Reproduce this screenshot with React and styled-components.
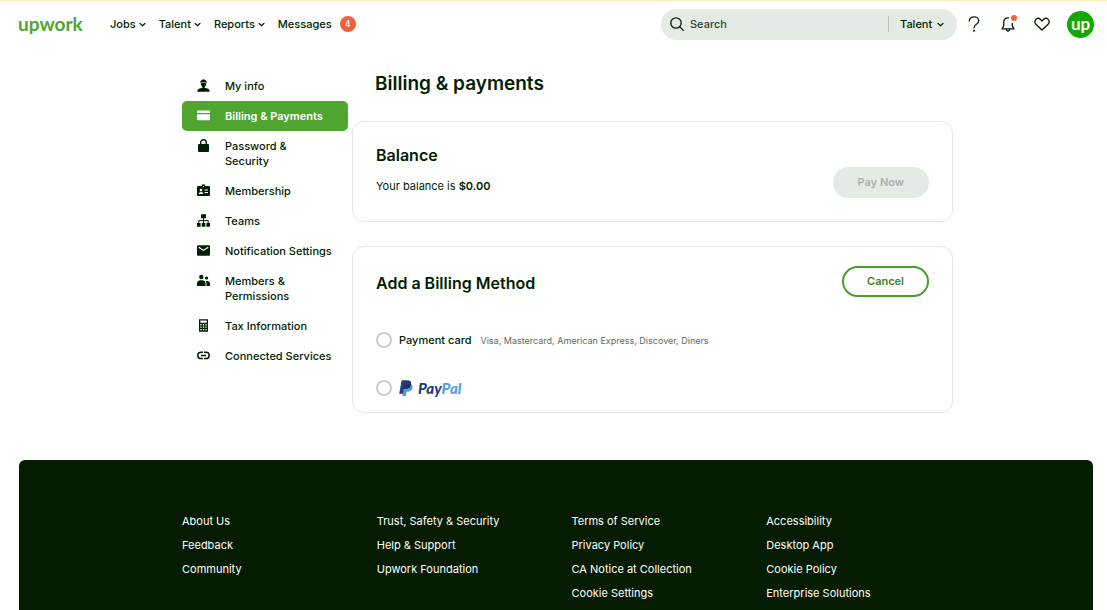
import { useState } from 'react';
import styled, { createGlobalStyle } from 'styled-components';

const GlobalStyle = createGlobalStyle`
  *, *::before, *::after {
    box-sizing: border-box;
  }
  body {
    margin: 0;
    background: #fff;
    color: #001e00;
    font-family: Inter, 'Helvetica Neue', Arial, sans-serif;
    font-size: 11px;
    line-height: 15px;
  }
  a {
    color: inherit;
    text-decoration: none;
  }
  button, input, select {
    font: inherit;
    color: inherit;
  }
`;

const SApp = styled.div`
  min-height: 100vh;
  display: flex;
  flex-direction: column;
  border-top: 1px solid #ffedc2;
`;

const SHeader = styled.header`
  display: flex;
  align-items: center;
  height: 46px;
  padding: 0 13px 0 18px;
`;

const SLogo = styled.a`
  width: 92px;
  color: #4fa52f;
  font-family: Lato, sans-serif;
  font-size: 19px;
  font-weight: 700;
  line-height: 24px;
`;

const SNav = styled.nav`
  display: flex;
  align-items: center;
  gap: 13px;
`;

const SNavButton = styled.button`
  display: flex;
  align-items: center;
  gap: 3px;
  padding: 0;
  border: 0;
  background: none;
  font-weight: 500;
`;

const SNavLink = styled.a`
  display: flex;
  align-items: center;
  gap: 8px;
  font-weight: 500;
`;

const SCount = styled.span`
  width: 16px;
  height: 16px;
  border-radius: 50%;
  background: #f0603c;
  color: #fff;
  font-size: 9px;
  line-height: 16px;
  text-align: center;
`;

const SSearch = styled.form`
  display: flex;
  align-items: center;
  width: 296px;
  height: 31px;
  margin-left: auto;
  padding: 0 13px 0 9px;
  border-radius: 16px;
  background: #e4ebe4;
`;

const SSearchInput = styled.input`
  flex: 1;
  min-width: 0;
  padding: 0 6px;
  border: 0;
  outline: 0;
  background: none;
  font-weight: 500;
  &::placeholder {
    color: #2f432f;
    opacity: 1;
  }
`;

const SSearchType = styled.div`
  display: flex;
  align-items: center;
  height: 16px;
  padding-left: 11px;
  border-left: 1px solid #b9c4b9;
  svg {
    margin-left: -7px;
    pointer-events: none;
  }
`;

const SSelect = styled.select`
  appearance: none;
  padding: 0 11px 0 0;
  border: 0;
  outline: 0;
  background: none;
  font-weight: 500;
`;

const SActions = styled.div`
  display: flex;
  align-items: center;
  gap: 16px;
  margin-left: 8px;
`;

const SIconButton = styled.button`
  position: relative;
  display: flex;
  padding: 0;
  border: 0;
  background: none;
`;

const SDot = styled.span`
  position: absolute;
  top: 0;
  right: 0;
  width: 6px;
  height: 6px;
  border-radius: 50%;
  background: #f0603c;
`;

const SAvatar = styled.button`
  width: 27px;
  height: 27px;
  padding: 0;
  border: 0;
  border-radius: 50%;
  background: #14a800;
  color: #fff;
  font-family: Lato, sans-serif;
  font-size: 17px;
  font-weight: 700;
  line-height: 22px;
`;

const SBody = styled.div`
  display: flex;
  align-items: flex-start;
  gap: 4px;
  padding: 24px 154px 47px 182px;
`;

const SSidebar = styled.nav`
  flex: 0 0 166px;
`;

const SSideLink = styled.a`
  display: flex;
  align-items: flex-start;
  gap: 15px;
  padding: 8px 15px 7px;
  border-radius: 5px;
  background: ${({ $active }) => ($active ? '#4fa52f' : 'transparent')};
  color: ${({ $active }) => ($active ? '#fff' : '#001e00')};
  font-weight: ${({ $active }) => ($active ? 600 : 500)};
  svg {
    flex: none;
  }
`;

const SMain = styled.main`
  flex: 1;
  min-width: 0;
  display: flex;
  flex-direction: column;
  gap: 24px;
`;

const STitle = styled.h1`
  margin: 0;
  padding-left: 23px;
  font-size: 19px;
  font-weight: 600;
  line-height: 26px;
`;

const SCard = styled.section`
  padding: 19px 23px 16px;
  border: 1px solid #e1e7e1;
  border-radius: 12px;
`;

const SCardTitle = styled.h2`
  margin: 0;
  font-size: 16px;
  font-weight: 600;
  line-height: 28px;
`;

const SCardHeader = styled.div`
  display: flex;
  align-items: flex-end;
  justify-content: space-between;
`;

const SBalanceRow = styled.div`
  display: flex;
  align-items: flex-start;
  justify-content: space-between;
  padding-bottom: 7px;
  p {
    margin: 10px 0 0;
  }
  strong {
    font-weight: 600;
  }
  button {
    margin-top: -2px;
  }
`;

const SButton = styled.button`
  height: 31px;
  padding: 0 23px;
  border: 2px solid ${({ disabled }) => (disabled ? '#e4ebe4' : '#4a9c2d')};
  border-radius: 16px;
  background: ${({ disabled }) => (disabled ? '#e4ebe4' : '#fff')};
  color: ${({ disabled }) => (disabled ? '#a9b3a9' : '#3c8224')};
  font-weight: 600;
`;

const SMethods = styled.div`
  display: flex;
  flex-direction: column;
  gap: 32px;
  margin-top: 35px;
`;

const SMethod = styled.label`
  display: flex;
  align-items: center;
  gap: 7px;
  height: 16px;
  font-weight: 500;
`;

const SRadio = styled.input`
  appearance: none;
  flex: none;
  width: 16px;
  height: 16px;
  margin: 0;
  border: 2px solid #c9d3c9;
  border-radius: 50%;
  &:checked {
    border: 5px solid #4fa52f;
  }
`;

const SHint = styled.span`
  margin-left: 2px;
  color: #5e6d55;
  font-size: 9px;
  font-weight: 400;
`;

const SPayPal = styled.span`
  display: flex;
  align-items: center;
  gap: 5px;
  color: #253b80;
  font-family: Lato, sans-serif;
  font-size: 15px;
  font-style: italic;
  font-weight: 900;
  em {
    color: #4f9fd8;
  }
`;

const SFooter = styled.footer`
  flex: 1;
  display: grid;
  grid-template-columns: repeat(4, 1fr);
  align-content: start;
  margin: 0 14px 0 19px;
  padding: 54px 132px 8px 163px;
  border-radius: 6px 6px 0 0;
  background: #061c00;
  color: #fff;
`;

const SFooterList = styled.ul`
  display: flex;
  flex-direction: column;
  gap: 9px;
  margin: 0;
  padding: 0;
  list-style: none;
  font-weight: 400;
  white-space: nowrap;
`;

const Chevron = () => (
  <svg width="7" height="7" viewBox="0 0 7 7" fill="none" stroke="currentColor" strokeWidth="1.3" strokeLinecap="round" strokeLinejoin="round">
    <path d="M1 2.4 3.5 4.8 6 2.4" />
  </svg>
);

const SearchIcon = () => (
  <svg width="14" height="14" viewBox="0 0 14 14" fill="none" stroke="#001e00" strokeWidth="1.3" strokeLinecap="round">
    <circle cx="6" cy="6" r="5.2" />
    <path d="m9.9 9.9 3.3 3.3" />
  </svg>
);

const HelpIcon = () => (
  <svg width="18" height="18" viewBox="0 0 18 18" fill="none" stroke="#001e00" strokeWidth="1.3" strokeLinecap="round">
    <path d="M4.3 6.1C4.3 3.6 6.3 1.9 9 1.9s4.7 1.7 4.7 4c0 1.7-1 2.5-2.3 3.4C9.9 10.300 9 11 9 12.900" />
    <circle cx="9" cy="15.800" r="1" fill="#001e00" stroke="none" />
  </svg>
);

const BellIcon = () => (
  <svg width="18" height="18" viewBox="0 0 18 18" fill="none" stroke="#001e00" strokeWidth="1.3" strokeLinecap="round" strokeLinejoin="round">
    <path d="M9.5 2.9C6.4 2.7 4.7 4.7 4.7 7.3v3.5L3.1 13.8h11.800l-1.600-3V8.500" />
    <path d="M7.200 14.200c.2 1.200.9 1.800 1.800 1.800s1.600-.6 1.800-1.800" />
  </svg>
);

const HeartIcon = () => (
  <svg width="18" height="18" viewBox="0 0 18 18" fill="none" stroke="#001e00" strokeWidth="1.3" strokeLinejoin="round">
    <path d="M9 15 2.900 9.200C1.500 7.800 1.500 5.600 2.800 4.400c1.300-1.300 3.400-1.200 4.700.1L9 6l1.500-1.500c1.300-1.300 3.400-1.400 4.700-.1 1.300 1.200 1.300 3.400-.1 4.800z" />
  </svg>
);

const SideIcon = ({ children }) => (
  <svg width="13" height="13" viewBox="0 0 13 13" fill="currentColor">
    {children}
  </svg>
);

const PayPalMark = () => (
  <svg width="14" height="17" viewBox="0 0 14 17">
    <path fill="#4f9fd8" d="M5.200 4h5.300c2.400 0 3.500 1.500 3.100 3.700-.5 2.700-2.200 4.100-4.800 4.100H7.600L6.800 16H3.300z" />
    <path fill="#253b80" d="M2.600.3h5.800c2.900 0 4.200 1.400 3.700 4.100-.5 2.900-2.400 4.300-5.300 4.300H4.900l-.9 5H.2z" />
    <path fill="#222d65" d="M5.600 4.300h5.400c.4 0 .8.100 1.100.2-.5 2.800-2.400 4.200-5.300 4.200H4.900z" />
  </svg>
);

const sideItems = [
  {
    label: 'My info',
    icon: (
      <>
        <path d="M3.500 2.500C3.800 1.200 4.800.8 5.600.7L6 .2h1l.4.500c.8.100 1.800.5 2.100 1.800l.5.500v.5H3V3z" />
        <path d="M3.800 4h5.400c0 2-.7 3.200-1.600 3.900v.9c2.600.5 5 1.100 5.200 3.900H.2c.2-2.800 2.600-3.400 5.200-3.900v-.9C4.500 7.200 3.800 6 3.800 4" />
      </>
    ),
  },
  {
    label: 'Billing & Payments',
    active: true,
    icon: <path d="M1 1.500h11a1 1 0 0 1 1 1V4H0V2.500a1 1 0 0 1 1-1M0 5.300h13v4.900a1 1 0 0 1-1 1H1a1 1 0 0 1-1-1z" />,
  },
  {
    label: 'Password & Security',
    icon: (
      <>
        <path d="M2 5h9a1 1 0 0 1 1 1v6a1 1 0 0 1-1 1H2a1 1 0 0 1-1-1V6a1 1 0 0 1 1-1" />
        <path d="M3.700 5.500V3.500a2.800 2.800 0 0 1 5.600 0v2" fill="none" stroke="currentColor" strokeWidth="1.4" />
      </>
    ),
  },
  {
    label: 'Membership',
    icon: (
      <path
        fillRule="evenodd"
        d="M1 2h3.800V.5h3.400V2H12a1 1 0 0 1 1 1v8a1 1 0 0 1-1 1H1a1 1 0 0 1-1-1V3a1 1 0 0 1 1-1m5 0v1.200h1V2zM4 4.800a1.300 1.300 0 1 0 0 2.600 1.300 1.300 0 0 0 0-2.600M1.800 10h4.400c0-1.300-1-2-2.200-2s-2.200.7-2.200 2M7.500 5.500v1H11v-1zm0 2.500v1H11V8z"
      />
    ),
  },
  {
    label: 'Teams',
    icon: (
      <>
        <path d="M4 .3h5v4H4zM0 9h3.600v3.700H0zM4.700 9h3.600v3.700H4.700zM9.400 9H13v3.700H9.400z" />
        <path d="M6.500 4v5M1.800 9V6.600h9.400V9" fill="none" stroke="currentColor" />
      </>
    ),
  },
  {
    label: 'Notification Settings',
    icon: (
      <>
        <path d="M1 1.300h11a1 1 0 0 1 1 1v8.400a1 1 0 0 1-1 1H1a1 1 0 0 1-1-1V2.300a1 1 0 0 1 1-1" />
        <path d="m1.700 3.200 4.800 3.200 4.800-3.200" fill="none" stroke="#fff" strokeWidth="1.2" />
      </>
    ),
  },
  {
    label: 'Members & Permissions',
    icon: (
      <>
        <circle cx="4.3" cy="3" r="2.2" />
        <circle cx="9.6" cy="4" r="1.6" />
        <path d="M0 12V9.600C0 7.600 1.400 6.300 3.300 6.300h2c1.900 0 3.300 1.300 3.300 3.300V12zM9.500 12V9.600c0-1.100-.3-2-.9-2.700h1.600c1.700 0 2.800 1.100 2.800 2.700V12z" />
      </>
    ),
  },
  {
    label: 'Tax Information',
    icon: (
      <path
        fillRule="evenodd"
        d="M2 .3h9v12.400H2zM3.300 1.600v2.200h6.400V1.600zm0 3.500v1.300h1.300V5.100zm2.500 0v1.300h1.400V5.100zm2.600 0v1.300h1.300V5.100zm-5.100 2.400v1.300h1.300V7.500zm2.500 0v1.300h1.400V7.500zm2.600 0v1.300h1.300V7.500zM3.300 9.900v1.300h1.300V9.900zm2.500 0v1.300h1.400V9.900zm2.600 0v1.300h1.300V9.900z"
      />
    ),
  },
  {
    label: 'Connected Services',
    icon: (
      <path
        d="M6 3.200H4a3.200 3.200 0 0 0 0 6.400h2M7 3.200h2a3.200 3.200 0 0 1 0 6.400H7M4 6.400h5"
        fill="none"
        stroke="currentColor"
        strokeWidth="1.5"
      />
    ),
  },
];

const footerColumns = [
  ['About Us', 'Feedback', 'Community'],
  ['Trust, Safety & Security', 'Help & Support', 'Upwork Foundation'],
  ['Terms of Service', 'Privacy Policy', 'CA Notice at Collection', 'Cookie Settings'],
  ['Accessibility', 'Desktop App', 'Cookie Policy', 'Enterprise Solutions'],
];

function Header() {
  return (
    <SHeader>
      <SLogo href="#">upwork</SLogo>
      <SNav>
        {['Jobs', 'Talent', 'Reports'].map((label) => (
          <SNavButton key={label} type="button">
            {label}
            <Chevron />
          </SNavButton>
        ))}
        <SNavLink href="#">
          Messages
          <SCount>4</SCount>
        </SNavLink>
      </SNav>
      <SSearch>
        <SearchIcon />
        <SSearchInput type="text" placeholder="Search" aria-label="Search" />
        <SSearchType>
          <SSelect aria-label="Search type">
            <option>Talent</option>
          </SSelect>
          <Chevron />
        </SSearchType>
      </SSearch>
      <SActions>
        <SIconButton type="button" aria-label="Help">
          <HelpIcon />
        </SIconButton>
        <SIconButton type="button" aria-label="Notifications">
          <BellIcon />
          <SDot />
        </SIconButton>
        <SIconButton type="button" aria-label="Saved">
          <HeartIcon />
        </SIconButton>
        <SAvatar type="button">up</SAvatar>
      </SActions>
    </SHeader>
  );
}

function Sidebar() {
  return (
    <SSidebar>
      {sideItems.map(({ label, icon, active }) => (
        <SSideLink key={label} href="#" $active={active}>
          <SideIcon>{icon}</SideIcon>
          {label}
        </SSideLink>
      ))}
    </SSidebar>
  );
}

function Balance() {
  return (
    <SCard>
      <SCardTitle>Balance</SCardTitle>
      <SBalanceRow>
        <p>
          Your balance is <strong>$0.00</strong>
        </p>
        <SButton type="button" disabled>
          Pay Now
        </SButton>
      </SBalanceRow>
    </SCard>
  );
}

function BillingMethod() {
  const [method, setMethod] = useState('');

  return (
    <SCard>
      <SCardHeader>
        <SCardTitle>Add a Billing Method</SCardTitle>
        <SButton type="button">Cancel</SButton>
      </SCardHeader>
      <SMethods>
        <SMethod>
          <SRadio type="radio" name="method" checked={method === 'card'} onChange={() => setMethod('card')} />
          Payment card
          <SHint>Visa, Mastercard, American Express, Discover, Diners</SHint>
        </SMethod>
        <SMethod>
          <SRadio type="radio" name="method" checked={method === 'paypal'} onChange={() => setMethod('paypal')} />
          <SPayPal>
            <PayPalMark />
            <span>
              Pay<em>Pal</em>
            </span>
          </SPayPal>
        </SMethod>
      </SMethods>
    </SCard>
  );
}

function Footer() {
  return (
    <SFooter>
      {footerColumns.map((links) => (
        <SFooterList key={links[0]}>
          {links.map((link) => (
            <li key={link}>
              <a href="#">{link}</a>
            </li>
          ))}
        </SFooterList>
      ))}
    </SFooter>
  );
}

function App() {
  return (
    <SApp>
      <GlobalStyle />
      <Header />
      <SBody>
        <Sidebar />
        <SMain>
          <STitle>Billing & payments</STitle>
          <Balance />
          <BillingMethod />
        </SMain>
      </SBody>
      <Footer />
    </SApp>
  );
}

export default App;
